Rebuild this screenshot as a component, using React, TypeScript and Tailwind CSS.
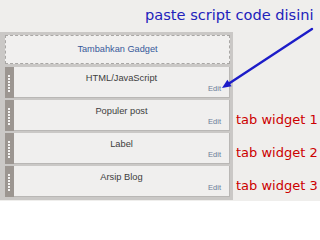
import React from "react";

const widgets = [
  { title: "HTML/JavaScript", label: "" },
  { title: "Populer post", label: "tab widget 1" },
  { title: "Label", label: "tab widget 2" },
  { title: "Arsip Blog", label: "tab widget 3" },
];

function Handle() {
  return (
    <div className="flex w-[9px] flex-col gap-[1px] bg-[#9c9691] pl-[3px] pt-[8px]">
      {[0, 1, 2, 3, 4, 5].map((i) => (
        <span key={i} className="block h-[2px] w-[2px] bg-[#f4f3f2]" />
      ))}
    </div>
  );
}

export default function App() {
  return (
    <div className="relative h-[201px] w-[320px] overflow-hidden bg-[#efeeec] font-['Liberation_Sans',Arial,sans-serif]">
      {/* Note */}
      <div className="h-[32px] pl-[145px] pt-[6px] font-['DejaVu_Sans',Verdana,sans-serif] text-[14.6px] leading-[17px] text-[#2222bb]">
        paste script code disini
      </div>

      <div className="flex">
        {/* Widget panel */}
        <div className="flex w-[233px] flex-col gap-[2px] bg-[#cac8c6] pb-[3px] pl-[5px] pr-[3px] pt-[3px]">
          <div className="mb-[1px] flex h-[29px] items-center justify-center border border-dashed border-[#a9a7a5] bg-[#f1f0ef] text-[9.2px] text-[#36589a]">
            Tambahkan Gadget
          </div>
          {widgets.map((w) => (
            <div key={w.title} className="flex h-[31px]">
              <Handle />
              <div className="flex flex-1 flex-col border-b border-r border-[#b9b7b5] bg-[#f0efee] pt-[5px]">
                <div className="text-center text-[9.3px] leading-[12px] text-[#3d3d3d]">{w.title}</div>
                <div className="mb-[6px] mr-[8px] mt-auto self-end text-[7.5px] leading-[9px] text-[#6a7d98]">
                  Edit
                </div>
              </div>
            </div>
          ))}
        </div>

        {/* Labels */}
        <div className="flex flex-col gap-[2px] pl-[3px] pt-[35px] font-['DejaVu_Sans',Verdana,sans-serif] text-[13px] leading-[15px] text-[#cc0000]">
          {widgets.map((w) => (
            <div key={w.title} className="h-[31px] whitespace-nowrap pt-[12px]">
              {w.label}
            </div>
          ))}
        </div>
      </div>

      {/* Arrow */}
      <svg className="pointer-events-none absolute left-0 top-0" width="320" height="201" viewBox="0 0 320 201">
        <line x1="312" y1="29" x2="229" y2="83.4" stroke="#1c1cc8" strokeWidth="2.4" strokeLinecap="round" />
        <polygon points="222,88 231.6,86.3 227.4,79.8" fill="#1c1cc8" />
      </svg>
    </div>
  );
}
